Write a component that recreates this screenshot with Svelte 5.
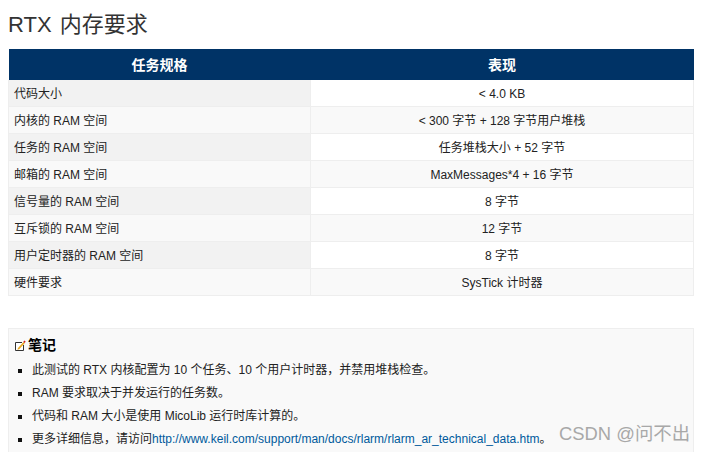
<script lang="ts">
  const rows = [
    ['代码大小', '< 4.0 KB'],
    ['内核的 RAM 空间', '< 300 字节 + 128 字节用户堆栈'],
    ['任务的 RAM 空间', '任务堆栈大小 + 52 字节'],
    ['邮箱的 RAM 空间', 'MaxMessages*4 + 16 字节'],
    ['信号量的 RAM 空间', '8 字节'],
    ['互斥锁的 RAM 空间', '12 字节'],
    ['用户定时器的 RAM 空间', '8 字节'],
    ['硬件要求', 'SysTick 计时器']
  ]
  const link = 'http://www.keil.com/support/man/docs/rlarm/rlarm_ar_technical_data.htm'
</script>

<main>
  <h1>RTX 内存要求</h1>
  <table>
    <thead>
      <tr><th class="first">任务规格</th><th>表现</th></tr>
    </thead>
    <tbody>
      {#each rows as row}
        <tr><td class="first">{row[0]}</td><td class="val">{row[1]}</td></tr>
      {/each}
    </tbody>
  </table>

  <section class="note">
    <h2>
      <svg width="11" height="11" viewBox="0 0 11 11">
        <path d="M7 2.5H0.5v8h8V5" fill="#fff" stroke="#333" stroke-width="1" />
        <path d="M3 8l5.5-6 1.2 1.2-5.5 6-1.8 0.5z" fill="#e8a820" />
        <path d="M8.3 1.7l1.2-1.2 1.2 1.2-1.2 1.2z" fill="#d02020" />
      </svg>
      笔记
    </h2>
    <ul>
      <li>此测试的 RTX 内核配置为 10 个任务、10 个用户计时器，并禁用堆栈检查。</li>
      <li>RAM 要求取决于并发运行的任务数。</li>
      <li>代码和 RAM 大小是使用 MicoLib 运行时库计算的。</li>
      <li>更多详细信息，请访问<a href={link}>{link}</a>。</li>
    </ul>
  </section>
  <div class="mark">CSDN @问不出</div>
</main>

<style>
  :global(body) {
    background: #fff;
    overflow: hidden;
  }

  main {
    position: relative;
    width: 704px;
    height: 452px;
    overflow: hidden;
    padding: 0 10px 0 8px;
    box-sizing: border-box;
    font-family: 'Liberation Sans', 'Noto Sans CJK SC', sans-serif;
    font-size: 12px;
    color: #222;
  }

  h1 {
    margin: 0;
    padding-top: 10px;
    height: 49px;
    box-sizing: border-box;
    font-size: 22px;
    line-height: 29px;
    font-weight: 400;
    word-spacing: 2px;
    color: #333;
  }

  table {
    width: 686px;
    border-collapse: collapse;
    table-layout: fixed;
  }

  th {
    height: 29px;
    padding: 0 0 2px;
    background: #003366;
    color: #fff;
    font-size: 14px;
    font-weight: 700;
    text-align: center;
  }

  th.first {
    width: 302px;
  }

  td {
    height: 24px;
    padding: 2px 0 0;
    border: 1px solid #eeeeee;
    border-top: 0;
    line-height: 16px;
  }

  td.first {
    padding-left: 5px;
    background: #f2f2f2;
  }

  td.val {
    text-align: center;
    background: #fff;
  }

  tbody tr:nth-child(even) td {
    background: #f9f9f9;
  }

  .note {
    margin-top: 32px;
    width: 686px;
    height: 140px;
    box-sizing: border-box;
    padding: 6px 6px;
    background: #f9f9f9;
    border: 1px solid #eeeeee;
  }

  h2 {
    display: flex;
    align-items: center;
    gap: 2px;
    margin: 0;
    height: 18px;
    font-size: 14px;
    font-weight: 700;
    color: #000;
  }

  h2 svg {
    margin-top: 3px;
  }

  ul {
    margin: 6px 0 0;
    padding: 0 0 0 17px;
    list-style: none;
  }

  li {
    position: relative;
    height: 23px;
    line-height: 23px;
    white-space: nowrap;
  }

  li::before {
    content: '';
    position: absolute;
    left: -14px;
    top: 10px;
    width: 4px;
    height: 4px;
    background: #111;
  }

  a {
    color: #005a9c;
    text-decoration: none;
  }

  .mark {
    position: absolute;
    left: 559px;
    top: 422px;
    font-size: 18.4px;
    line-height: 24px;
    color: #a8a8a8;
    white-space: nowrap;
  }
</style>
